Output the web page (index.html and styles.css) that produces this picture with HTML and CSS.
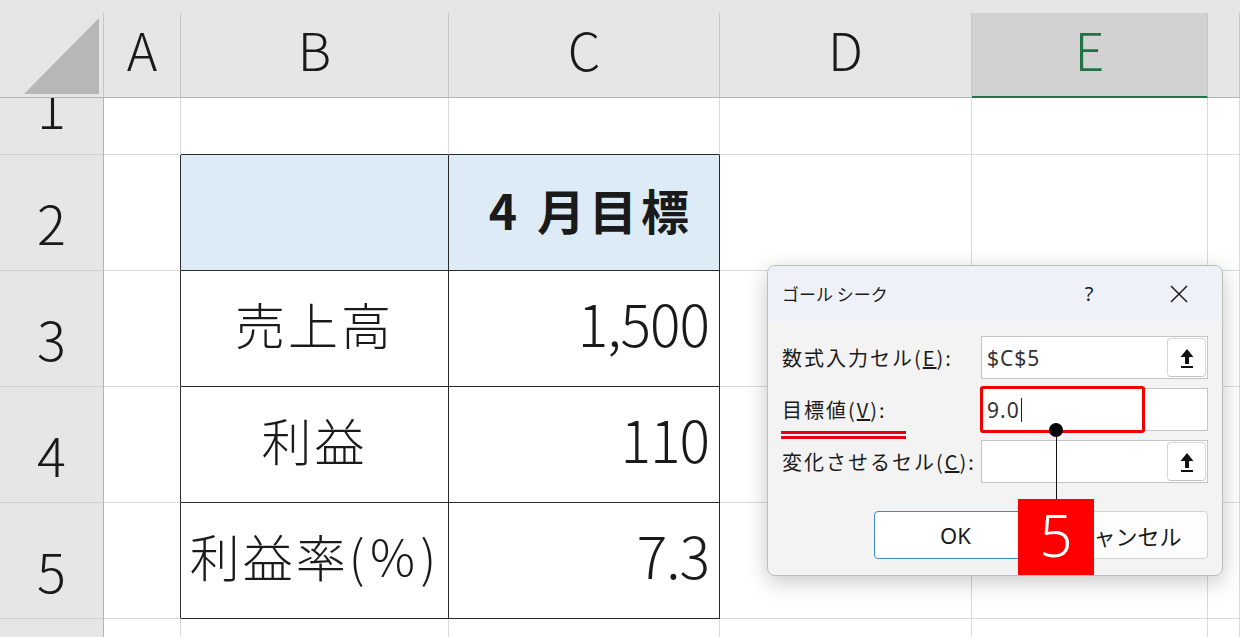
FILE: index.html
```
<!DOCTYPE html>
<html lang="ja">
<head>
  <meta charset="UTF-8" />
  <title>ゴール シーク</title>
  <link rel="stylesheet" href="styles.css">
</head>
<body>
  <div class="sheet">
    <div class="grid">
      <!-- 列見出し -->
      <div class="hd corner">
        <svg width="103" height="84" viewBox="0 0 103 84"><polygon points="24,81 99,81 99,5" fill="#b7b7b7"/></svg>
      </div>
      <div class="hd">A</div>
      <div class="hd">B</div>
      <div class="hd">C</div>
      <div class="hd">D</div>
      <div class="hd sel">E</div>
      <div class="hd"></div>

      <!-- 1 -->
      <div class="rh">1</div>
      <div class="c"></div>
      <div class="c tb"></div>
      <div class="c tb"></div>
      <div class="c"></div>
      <div class="c"></div>
      <div class="c"></div>

      <!-- 2 -->
      <div class="rh">2</div>
      <div class="c tl"></div>
      <div class="c t th"></div>
      <div class="c t th num"><span class="m4">4</span>月目標</div>
      <div class="c"></div>
      <div class="c"></div>
      <div class="c"></div>

      <!-- 3 -->
      <div class="rh">3</div>
      <div class="c tl"></div>
      <div class="c t lbl">売上高</div>
      <div class="c t num">1,500</div>
      <div class="c"></div>
      <div class="c"></div>
      <div class="c"></div>

      <!-- 4 -->
      <div class="rh">4</div>
      <div class="c tl"></div>
      <div class="c t lbl">利益</div>
      <div class="c t num">110</div>
      <div class="c"></div>
      <div class="c"></div>
      <div class="c"></div>

      <!-- 5 -->
      <div class="rh">5</div>
      <div class="c tl"></div>
      <div class="c t lbl">利益率(％)</div>
      <div class="c t num">7.3</div>
      <div class="c"></div>
      <div class="c"></div>
      <div class="c"></div>

      <!-- 6 -->
      <div class="rh"></div>
      <div class="c"></div>
      <div class="c"></div>
      <div class="c"></div>
      <div class="c"></div>
      <div class="c"></div>
      <div class="c"></div>
    </div>

    <!-- ゴールシーク ダイアログ -->
    <div class="dialog">
      <div class="title-bar">
        <span class="title">ゴール シーク</span>
        <span class="help">?</span>
        <span class="close">
          <svg width="20" height="20" viewBox="0 0 20 20"><path d="M2 2 L18 18 M18 2 L2 18" stroke="#222" stroke-width="1.6" fill="none"/></svg>
        </span>
      </div>
      <div class="dlg-body">
        <div class="form">
          <label>数式入力セル(<u>E</u>):</label>
          <div class="field">
            <span class="val">$C$5</span>
            <span class="ref-btn">
              <svg width="14" height="22" viewBox="0 0 14 22"><polygon points="7,2 0.5,10 13.5,10" fill="#111"/><rect x="5" y="9" width="4" height="8" fill="#111"/><rect x="1" y="19" width="12" height="2" fill="#111"/></svg>
            </span>
          </div>

          <label>目標値(<u>V</u>):</label>
          <div class="field">
            <span class="val">9.0<span class="caret"></span></span>
          </div>

          <label>変化させるセル(<u>C</u>):</label>
          <div class="field">
            <span class="val"></span>
            <span class="ref-btn">
              <svg width="14" height="22" viewBox="0 0 14 22"><polygon points="7,2 0.5,10 13.5,10" fill="#111"/><rect x="5" y="9" width="4" height="8" fill="#111"/><rect x="1" y="19" width="12" height="2" fill="#111"/></svg>
            </span>
          </div>
        </div>

        <div class="buttons">
          <button class="btn primary">OK</button>
          <button class="btn">キャンセル</button>
        </div>
      </div>

      <!-- 注釈（赤枠・番号） -->
      <div class="mark-underline"></div>
      <div class="mark-box"></div>
      <div class="mark-line"></div>
      <div class="mark-dot"></div>
      <div class="mark-badge">5</div>
    </div>
  </div>
</body>
</html>
```

FILE: styles.css
```
body {
  margin: 0;
  background: #fff;
  font-family: "Noto Sans CJK JP", sans-serif;
  color: #1a1a1a;
  overflow: hidden;
}

.sheet {
  position: relative;
  width: 1240px;
  height: 637px;
  overflow: hidden;
}

/* シートのグリッド */
.grid {
  display: grid;
  grid-template-columns: 104px 77px 268px 271px 252px 236px 1fr;
  grid-template-rows: 98px 57px repeat(4, 116px) 1fr;
  height: 100%;
  background: #e6e6e6;
}

.grid > div {
  box-sizing: border-box;
}

/* 列見出し */
.hd {
  margin-top: 13px;
  background: #e6e6e6;
  border-right: 1px solid #c6c6c6;
  border-bottom: 1px solid #b3b3b3;
  display: flex;
  align-items: flex-end;
  justify-content: center;
  padding-bottom: 22px;
  font-size: 52px;
  font-weight: 300;
  line-height: 1;
}

.hd.corner {
  padding: 0;
  align-items: flex-start;
  justify-content: flex-start;
}

.hd.sel {
  background: #d2d2d2;
  color: #217346;
  border-bottom: 2px solid #217346;
  padding-bottom: 21px;
}

/* 行見出し */
.rh {
  background: #e6e6e6;
  border-right: 1px solid #b3b3b3;
  border-bottom: 1px solid #d0d0d0;
  display: flex;
  align-items: flex-end;
  justify-content: center;
  padding-bottom: 21px;
  font-size: 54px;
  font-weight: 300;
  line-height: 1;
  overflow: hidden;
}

/* セル */
.c {
  background: #fff;
  border-right: 1px solid #dadada;
  border-bottom: 1px solid #dadada;
  display: flex;
  align-items: center;
  line-height: 1;
  white-space: nowrap;
}

.c.tb { border-bottom-color: #2b2b2b; }
.c.tl { border-right-color: #2b2b2b; }
.c.t {
  border-right-color: #2b2b2b;
  border-bottom-color: #2b2b2b;
}
.c.th { background: #ddebf7; }

.lbl {
  justify-content: center;
  padding-bottom: 12px;
  font-size: 50px;
  font-weight: 300;
  letter-spacing: 3px;
}

.num {
  justify-content: flex-end;
  padding-right: 10px;
  padding-bottom: 12px;
  font-size: 57px;
  font-weight: 300;
  letter-spacing: -1px;
}

.th.num {
  font-weight: bold;
  font-size: 48px;
  padding-right: 26px;
  padding-bottom: 8px;
  letter-spacing: 4px;
}

.m4 {
  margin-right: 16px;
}

/* ダイアログ */
.dialog {
  position: absolute;
  left: 767px;
  top: 265px;
  width: 456px;
  height: 311px;
  box-sizing: border-box;
  border: 1px solid #bdbdbd;
  border-radius: 8px;
  background: #f3f3f3;
  box-shadow: 0 6px 22px rgba(0, 0, 0, 0.22);
}

.title-bar {
  height: 55px;
  background: #eef2f8;
  border-radius: 8px 8px 0 0;
  display: flex;
  align-items: center;
  padding-left: 14px;
}

.title-bar .title {
  flex: 1;
  font-size: 17px;
}

.title-bar .help {
  width: 40px;
  text-align: center;
  font-family: "Noto Sans", sans-serif;
  font-size: 20px;
  margin-right: 50px;
}

.title-bar .close {
  width: 40px;
  display: flex;
  justify-content: center;
  margin-right: 23px;
}

.dlg-body {
  padding: 15px 14px 16px 14px;
}

.form {
  display: grid;
  grid-template-columns: 199px 227px;
  grid-auto-rows: 43px;
  row-gap: 9px;
  align-items: center;
}

.form label {
  font-size: 20px;
  letter-spacing: 2px;
  white-space: nowrap;
}

.field {
  box-sizing: border-box;
  height: 43px;
  border: 1px solid #c4c4c4;
  background: #fff;
  display: flex;
  align-items: center;
  padding-left: 5px;
  font-family: "Noto Sans", sans-serif;
  font-size: 21px;
  letter-spacing: 1px;
  color: #333;
}

.field .val {
  display: flex;
  align-items: center;
}

.caret {
  display: inline-block;
  width: 1px;
  height: 24px;
  background: #222;
  margin-left: 1px;
}

.ref-btn {
  margin-left: auto;
  margin-right: 1px;
  box-sizing: border-box;
  width: 39px;
  height: 39px;
  border: 1px solid #d6d6d6;
  border-bottom-color: #c2c2c2;
  border-radius: 4px;
  background: #fff;
  display: flex;
  align-items: center;
  justify-content: center;
}

.buttons {
  display: flex;
  justify-content: flex-end;
  gap: 8px;
  margin-top: 28px;
}

.btn {
  width: 163px;
  height: 48px;
  border: 1px solid #d3d3d3;
  border-radius: 4px;
  background: #fdfdfd;
  font-family: "Noto Sans", "Noto Sans CJK JP", sans-serif;
  font-size: 22px;
  color: #1a1a1a;
}

.btn.primary {
  border-color: #3b86d0;
  background: #fff;
}

/* 注釈（赤枠・番号） */
.mark-underline {
  position: absolute;
  left: 13px;
  top: 165px;
  width: 125px;
  height: 2px;
  border-top: 3px solid #e60012;
  border-bottom: 3px solid #e60012;
}

.mark-box {
  position: absolute;
  left: 212px;
  top: 120px;
  width: 165px;
  height: 47px;
  box-sizing: border-box;
  border: 3px solid #ee0000;
  border-radius: 3px;
}

.mark-line {
  position: absolute;
  left: 288px;
  top: 164px;
  width: 1px;
  height: 69px;
  background: #111;
}

.mark-dot {
  position: absolute;
  left: 281px;
  top: 157px;
  width: 14px;
  height: 14px;
  border-radius: 50%;
  background: #000;
}

.mark-badge {
  position: absolute;
  left: 250px;
  top: 233px;
  width: 76px;
  height: 72px;
  padding-bottom: 4px;
  background: #ff0000;
  color: #fff;
  font-family: "Noto Sans", sans-serif;
  font-size: 58px;
  font-weight: 300;
  line-height: 72px;
  text-align: center;
}
```
